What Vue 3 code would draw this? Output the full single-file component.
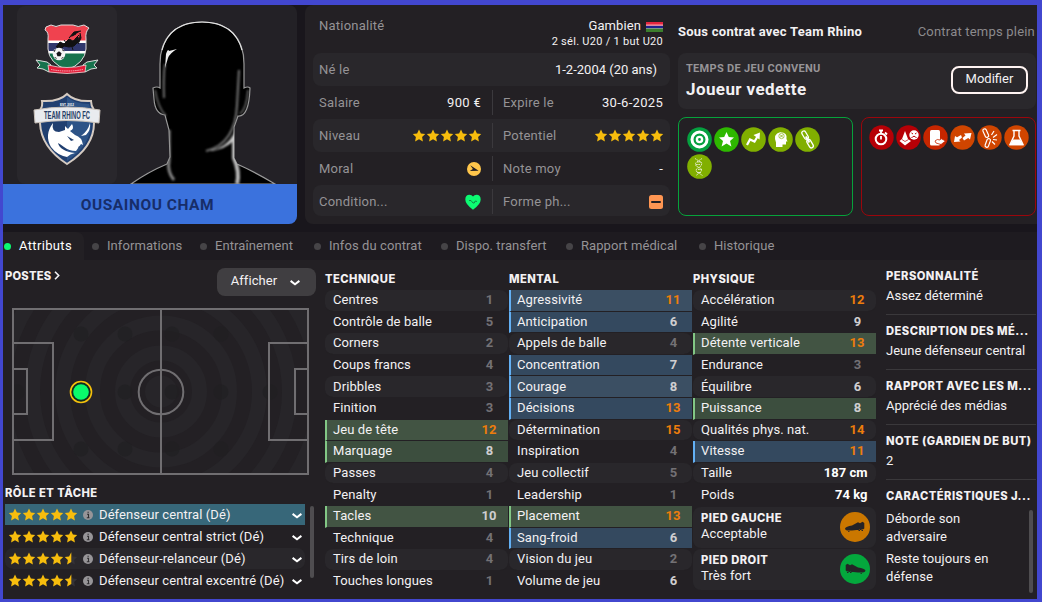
<script setup>
import { computed } from 'vue';

const star = 'M6.5 .6 8.4 4.5 12.7 5 9.6 8 10.4 12.4 6.5 10.3 2.6 12.4 3.4 8 .3 5 4.6 4.5Z';

const tabs = [
  { label: 'Attributs', width: 81 },
  { label: 'Informations', width: 108 },
  { label: 'Entraînement', width: 114 },
  { label: 'Infos du contrat', width: 127 },
  { label: 'Dispo. transfert', width: 125 },
  { label: 'Rapport médical', width: 133 },
  { label: 'Historique', width: 96 },
];

// name, value, highlight (g: key attribute, b: preferable attribute)
const technique = [
  ['Centres', 1], ['Contrôle de balle', 5], ['Corners', 2], ['Coups francs', 4], ['Dribbles', 3],
  ['Finition', 3], ['Jeu de tête', 12, 'g'], ['Marquage', 8, 'g'], ['Passes', 4], ['Penalty', 1],
  ['Tacles', 10, 'g'], ['Technique', 4], ['Tirs de loin', 4], ['Touches longues', 1],
];
const mental = [
  ['Agressivité', 11, 'b'], ['Anticipation', 6, 'b'], ['Appels de balle', 4], ['Concentration', 7, 'b'],
  ['Courage', 8, 'b'], ['Décisions', 13, 'b'], ['Détermination', 15], ['Inspiration', 4],
  ['Jeu collectif', 5], ['Leadership', 1], ['Placement', 13, 'g'], ['Sang-froid', 6, 'b'],
  ['Vision du jeu', 2], ['Volume de jeu', 6],
];
const physique = [
  ['Accélération', 12], ['Agilité', 9], ['Détente verticale', 13, 'g'], ['Endurance', 3],
  ['Équilibre', 6], ['Puissance', 8, 'g'], ['Qualités phys. nat.', 14], ['Vitesse', 11, 'b'],
  ['Taille', '187 cm'], ['Poids', '74 kg'],
];

const columns = computed(() => [
  { title: 'TECHNIQUE', rows: technique },
  { title: 'MENTAL', rows: mental },
  { title: 'PHYSIQUE', rows: physique },
]);

const level = (value) => {
  if (typeof value === 'string') return 'unit';
  if (value > 10) return 'high';
  return value > 5 ? 'mid' : 'low';
};

const roles = [
  { name: 'Défenseur central (Dé)', half: false },
  { name: 'Défenseur central strict (Dé)', half: false },
  { name: 'Défenseur-relanceur (Dé)', half: true },
  { name: 'Défenseur central excentré (Dé)', half: true },
];

const facts = [
  ['PERSONNALITÉ', 'Assez déterminé'],
  ['DESCRIPTION DES MÉ...', 'Jeune défenseur central'],
  ['RAPPORT AVEC LES M...', 'Apprécié des médias'],
  ['NOTE (GARDIEN DE BUT)', '2'],
];

const spots = [
  [69, 26], [113, 26], [160, 26], [209, 26],
  [5, 84], [113, 84], [160, 84], [209, 84], [258, 84],
  [69, 141], [113, 141], [160, 141], [209, 141],
];

const body = 'M131 184Q148 172 167 164L170 157L169 130L165 115Q155 114 154 99L153 88Q157 86 160 88L160 64C160 38 175 22 202 22C229 22 244 38 244 64L244 88Q248 86 250 88Q249 117 238 116L234 127V158L237 164Q255 172 275 184Z';
</script>
<template>
  <div class="screen">
    <header class="top">
      <section class="player">
        <div class="portrait">
          <div class="badges">
            <svg class="flag-badge" width="64" height="52" viewBox="0 0 64 52">
              <path d="M1 36 12 38 16 41 14 48 8 45 2 44 5 41ZM63 36 52 38 48 41 50 48 56 45 62 44 59 41Z" fill="#16734d" stroke="#d9dedb" stroke-width="1" />
              <clipPath id="shield"><path d="M11 3 16 1Q21 4 26 1H38Q43 4 49 1L54 4Q50 8 51 15V25Q50 39 32 46Q14 39 13 25V15Q14 8 10 6Z" /></clipPath>
              <g clip-path="url(#shield)">
                <path d="M8 0H56V18H8Z" fill="#f0424f" />
                <path d="M8 16.5H56V19.5H8ZM8 27H56V30H8Z" fill="#fff" />
                <path d="M8 19H56V27H8Z" fill="#30376d" />
                <path d="M8 29.5H56V48H8Z" fill="#16734d" />
              </g>
              <path d="M11 3 16 1Q21 4 26 1H38Q43 4 49 1L54 4Q50 8 51 15V25Q50 39 32 46Q14 39 13 25V15Q14 8 10 6Z" fill="none" stroke="#e2dede" />
              <path d="M21 23 25 18 29 20 34 15 38 17 43 13 44 17 39 22 34 23 29 22 25 26M34 14 39 8 46 7M37 12 41 10M45 9 46 14 43 20M36 20 38 26M32 20 29 16M40 15 44 11" fill="#111" stroke="#111" stroke-width="1" />
              <circle cx="24" cy="30" r="6.3" fill="#f4f4f4" />
              <path d="M24 27.3 26.6 29.2 25.6 32.3H22.4L21.4 29.2ZM18.5 27 21 25 19.6 28ZM27 24.7 29.6 27.3 27.7 27ZM19 33 21 33.5 22 35.5ZM29 33 27 33.5 26 35.5Z" fill="#17161a" />
              <path d="M13 41Q32 46 51 41L50 48Q32 51 14 48Z" fill="#e41d39" stroke="#e9d9d9" stroke-width=".8" />
              <path d="M16 45.5Q32 48.5 48 45.5" fill="none" stroke="#f7b5bd" stroke-width="1" stroke-dasharray="1.5 .7" />
            </svg>
            <svg class="club-badge" width="68" height="74" viewBox="0 0 68 74">
              <path d="M34 2Q42 10 58 9Q58 14 61 18V31Q61 55 34 72Q8 55 7 31V18Q10 14 9 9Q26 10 34 2Z" fill="#203f70" stroke="#d5cbc2" stroke-width="2" />
              <path d="M34 5Q42 12 56 12L58 19V31Q58 53 34 69Z" fill="#2d5387" />
              <path d="M1 18Q34 12 67 18L66 31Q34 26 2 31Z" fill="#e9ebef" stroke="#c9c1b9" />
              <text x="34" y="26.5" text-anchor="middle" textLength="46" lengthAdjust="spacingAndGlyphs">TEAM RHINO FC</text>
              <text x="34" y="13.5" class="est" text-anchor="middle">EST. 2012</text>
              <path d="M20 31Q11 43 18 55Q24 63 34 65Q37 62 42 61Q27 59 25 51Q27 52 31 55Q36 59 43 59L48 52L50 53Q49 45 42 43L37 39Q42 37 39 32L35 37L32 34V38L26 40Q18 40 20 31ZM57 31Q58 38 53 43L48 44Q55 39 57 31Z" fill="#fff" />
              <path d="M34 44 41 48 38 49ZM45 55 47 54 46 56Z" fill="#203f70" />
            </svg>
          </div>
          <svg class="silhouette" width="180" height="179" viewBox="117 5 180 179">
            <defs>
              <filter id="soft" x="-20%" y="-20%" width="140%" height="140%"><feGaussianBlur stdDeviation="1.3" /></filter>
              <clipPath id="body"><path :d="body" /></clipPath>
            </defs>
            <path :d="body" fill="#000" stroke="#999" stroke-width="1.2" />
            <path d="M162 50C167 32 179 22 202 22C225 22 237 32 242 50" fill="none" stroke="#e4e4e4" stroke-width="1.2" />
            <g clip-path="url(#body)" fill="none" filter="url(#soft)">
              <path d="M164 98Q163 78 165 64" stroke="#888" stroke-width="1.6" />
              <path d="M239 70Q238 88 237 105C236 130 226 146 206 151" stroke="#777" stroke-width="2" />
              <path d="M234 136V158Q240 172 237 184" stroke="#bbb" stroke-width="4" />
              <path d="M169 130V160Q167 172 174 180" stroke="#888" stroke-width="3" />
              <path d="M155 90Q158 108 166 116M248 90Q247 108 240 114" stroke="#777" stroke-width="1.5" />
              <path d="M208 151Q228 148 235 131V139Q226 150 208 151Z" fill="#ccc" />
            </g>
            <path d="M166 54Q168 48 169 51L177 49Q170 53 168 58L165 68Z" fill="#eee" />
          </svg>
        </div>
        <h1>OUSAINOU CHAM</h1>
      </section>

      <section class="summary">
        <div class="info">
          <div class="nation">
            <span class="label">Nationalité</span>
            <div class="nation-value">
              <div class="country">Gambien
                <svg width="17" height="10" viewBox="0 0 17 10">
                  <path d="M0 0H17V4H0Z" fill="#e3253f" /><path d="M0 2H17V4H0Z" fill="#ef6573" />
                  <path d="M0 3.5H17V7H0Z" fill="#b6b3db" /><path d="M0 4H17V6H0Z" fill="#20218c" />
                  <path d="M0 6.5H17V10H0Z" fill="#3b7d2d" />
                </svg>
              </div>
              <div class="caps">2 sél. U20 / 1 but U20</div>
            </div>
          </div>
          <div class="info-row shaded born"><span class="label">Né le</span><span>1-2-2004 (20 ans)</span></div>
          <div class="info-row">
            <div class="cell"><span class="label">Salaire</span><span class="wide">900 €</span></div>
            <div class="cell"><span class="label">Expire le</span><span class="wide">30-6-2025</span></div>
          </div>
          <div class="info-row shaded">
            <div v-for="name in ['Niveau', 'Potentiel']" :key="name" class="cell rating">
              <span class="label">{{ name }}</span>
              <span class="stars"><svg v-for="n in 5" :key="n" width="14" height="13" viewBox="0 0 13 13"><path :d="star" fill="#f7bd0d" /></svg></span>
            </div>
          </div>
          <div class="info-row">
            <div class="cell">
              <span class="label">Moral</span>
              <svg width="14" height="14" viewBox="0 0 15 15"><circle cx="7.5" cy="7.5" r="7.5" fill="#ffc64b" /><path d="M3.5 3.5 12.5 9.5 3 9.7 6.3 7.6Z" fill="#252024" /></svg>
            </div>
            <div class="cell"><span class="label">Note moy</span><span>-</span></div>
          </div>
          <div class="info-row shaded last">
            <div class="cell">
              <span class="label">Condition...</span>
              <svg width="16" height="16" viewBox="0 0 16 16"><path d="M8 15.7Q.3 10.2.3 5.5Q.3.8 4.5.7Q6.8.7 8 2.5Q9.2.7 11.5.7Q15.7.8 15.7 5.5Q15.7 10.2 8 15.7Z" fill="#0cfa72" /><path d="M4 6.5 6 6.5 8 9 9.2 9 10.2 7 12 7.5" fill="none" stroke="#126d3d" stroke-width=".8" /></svg>
            </div>
            <div class="cell">
              <span class="label">Forme ph...</span>
              <svg width="14" height="14" viewBox="0 0 14 14"><rect width="14" height="14" rx="2.5" fill="#ff9652" /><path d="M3 7H11" stroke="#252024" stroke-width="2" stroke-linecap="round" /></svg>
            </div>
          </div>
        </div>

        <div class="contract">
          <div class="contract-head"><b>Sous contrat avec Team Rhino</b><span>Contrat temps plein</span></div>
          <div class="playing-time">
            <div>
              <h3>TEMPS DE JEU CONVENU</h3>
              <p>Joueur vedette</p>
            </div>
            <button class="edit">Modifier</button>
          </div>
          <div class="traits">
            <div class="trait-box good">
              <svg viewBox="0 0 25 25"><circle cx="12.5" cy="12.5" r="12.3" fill="#05a03f" /><circle cx="12.5" cy="12.5" r="7.5" fill="none" stroke="#fff" stroke-width="3" /><circle cx="12.5" cy="12.5" r="2.6" fill="none" stroke="#fff" stroke-width="2.4" /></svg>
              <svg viewBox="0 0 25 25"><circle cx="12.5" cy="12.5" r="12.3" fill="#2eb800" /><path d="M12.5 5 14.8 10 20 10.4 16 14 17.4 19.6 12.5 16.6 7.6 19.6 9 14 5 10.4 10.2 10Z" fill="#fff" /></svg>
              <svg viewBox="0 0 25 25"><circle cx="12.5" cy="12.5" r="12.3" fill="#81af00" /><path d="M6 18 9 12.5 13.5 14.5 16.5 9.5" fill="none" stroke="#fff" stroke-width="2.2" /><path d="M12.5 8 19 5.5 18.5 12.5Z" fill="#fff" /></svg>
              <svg viewBox="0 0 25 25"><circle cx="12.5" cy="12.5" r="12.3" fill="#81af00" /><path d="M8 20V15.5Q4.8 7 12 5.3Q19.6 5 18.5 12L19.5 14.5H18V17.5H14.5V20Z" fill="#fff" /><circle cx="13.5" cy="9" r="2.7" fill="none" stroke="#81af00" stroke-width=".6" /><path d="M12 7.5 15 10.5M15 7.5 12 10.5" stroke="#81af00" stroke-width=".8" /></svg>
              <svg viewBox="0 0 25 25"><circle cx="12.5" cy="12.5" r="12.3" fill="#81af00" /><g fill="none" stroke="#fff" stroke-width="1.3" transform="rotate(-30 12.5 12.5)"><rect x="10.6" y="3" width="4" height="9" rx="2" /><rect x="10.6" y="13" width="4" height="9" rx="2" /><path d="M12.6 9V16" stroke-width="2" /></g></svg>
              <svg viewBox="0 0 25 25"><circle cx="12.5" cy="12.5" r="12.3" fill="#81af00" /><path d="M8 4.5 15 9 14 12 9.5 15 9 17 15.5 21.5M15 4.5 8.5 9 9 12 14 14.5 14.5 17 9 21.5M10 8H14M9 10.5H13M11 15.5H15M10 18.5H14" fill="none" stroke="#eff4df" stroke-width=".8" stroke-dasharray="1.8 .5" /></svg>
            </div>
            <div class="trait-box bad">
              <svg viewBox="0 0 25 25"><circle cx="12.5" cy="12.5" r="12.2" fill="#b60006" /><circle cx="12" cy="14" r="5.3" fill="none" stroke="#fff" stroke-width="2" /><path d="M10 5.5H14M12 6V9M12 14.5V11M16 7.5 18 9.5" stroke="#fff" stroke-width="1.8" /></svg>
              <svg viewBox="0 0 25 25"><circle cx="12.5" cy="12.5" r="12.2" fill="#b60006" /><path d="M9 6 6 14 3.5 16 9 20.5 15 16 12 14Z" fill="#fff" /><path d="M6 14.5 9 16.5 12.5 14.5" fill="none" stroke="#b60006" stroke-width=".7" /><circle cx="18" cy="10" r="4.7" fill="#fff" /><path d="M15.5 8 17 9M20.5 8 19 9M15.5 13Q18 9.5 20.5 13" fill="none" stroke="#b60006" stroke-width="1" /></svg>
              <svg viewBox="0 0 25 25"><circle cx="12.5" cy="12.5" r="12.2" fill="#c72600" /><rect x="7" y="5" width="10" height="15.5" rx="1.5" fill="#fff" /><path d="M12 16Q14 13.5 17 15L18 13.5 22.5 16 18 19.5 13 18Z" fill="#fff" stroke="#c72600" stroke-width=".8" /></svg>
              <svg viewBox="0 0 25 25"><circle cx="12.5" cy="12.5" r="12.2" fill="#d04500" /><path d="M4 17 5 11 7 12.2 11 10 12 12.5 9 15 10.5 16.5ZM21.5 8 14 8.5 15.5 10.5 12.5 13 14 15.5 18.2 13 20 14.5Z" fill="#fff" /></svg>
              <svg viewBox="0 0 25 25"><circle cx="12.5" cy="12.5" r="12.2" fill="#d04500" /><g fill="none" stroke="#fff" stroke-width="1.2"><rect x="7" y="3.5" width="3.5" height="9" rx="1.7" transform="rotate(-25 9 8)" /><rect x="9" y="13.5" width="3.5" height="9" rx="1.7" transform="rotate(20 11 18)" /><path d="M14.5 10 17 6M16 12.5 20 9.5M16 14.5 20 15M15 16.5 18 19.5" /></g></svg>
              <svg viewBox="0 0 25 25"><circle cx="12.5" cy="12.5" r="12.2" fill="#d04500" /><path d="M8.5 5.5H16.5M10 6V11L6 19.5H19L15 11V6" fill="none" stroke="#fff" stroke-width="1.4" /><path d="M9 14.5H16L19.5 20.3H5.5Z" fill="#fff" /></svg>
            </div>
          </div>
        </div>
      </section>
    </header>

    <nav class="tabs">
      <div v-for="(tab, i) in tabs" :key="tab.label" class="tab" :class="{ active: i === 0 }" :style="{ width: tab.width + 'px' }">
        <i class="dot" /><span>{{ tab.label }}</span>
      </div>
    </nav>

    <main class="content">
      <section class="left">
        <div class="positions-head">
          <h2>POSTES <svg width="6" height="9" viewBox="0 0 6 9"><path d="M1 .8 4.7 4.5 1 8.2" fill="none" stroke="#f4f1f3" stroke-width="1.6" /></svg></h2>
          <button class="show">Afficher
            <svg width="10" height="6" viewBox="0 0 10 6"><path d="M.6 .9 5 4.3 9.4 .9" fill="none" stroke="#fff" stroke-width="2" /></svg>
          </button>
        </div>
        <svg class="pitch" width="297" height="167" viewBox="0 0 297 167">
          <g fill="none" stroke="#272529" stroke-width="15">
            <circle v-for="r in [8.5, 38.5, 68.5, 98.5, 128.5, 158.5]" :key="r" cx="149" cy="83.5" :r="r" />
          </g>
          <circle v-for="([x, y], i) in spots" :key="i" :cx="x" :cy="y" r="7.5" fill="#1f1f21" opacity=".6" />
          <g fill="none" stroke="#706e71" stroke-width="2">
            <path d="M1 1H296V166H1ZM149 1V166M1 35H41V132H1M1 61H15V106H1M296 35H257V132H296M296 61H283V106H296" />
            <circle cx="149" cy="84" r="22.3" />
          </g>
          <circle cx="69" cy="84" r="10.5" fill="#102c20" stroke="#f5c00c" stroke-width="1.6" />
          <circle cx="69" cy="84" r="7.8" fill="#09fb6b" />
        </svg>
        <h2 class="roles-title">RÔLE ET TÂCHE</h2>
        <div class="roles">
          <div class="role-list">
            <div v-for="(role, i) in roles" :key="role.name" class="role" :class="{ selected: i === 0, alt: i === 2 }">
              <span class="stars">
                <svg v-for="n in 5" :key="n" width="14" height="13" viewBox="0 0 13 13">
                  <path :d="star" :fill="role.half && n === 5 ? '#343236' : '#f7bd0d'" />
                  <path v-if="role.half && n === 5" d="M6.8 .3V10.1L2.6 12.4 3.4 8 .3 5 4.6 4.5Z" fill="#f7bd0d" />
                </svg>
              </span>
              <svg class="about" width="10" height="10" viewBox="0 0 10 10"><circle cx="5" cy="5" r="5" /><path d="M4 4.3H5.5V7.5M3.8 7.8H6.5M4.5 2.2H5.8" /></svg>
              <span class="role-name">{{ role.name }}</span>
              <svg class="arrow" width="10" height="6" viewBox="0 0 10 6"><path d="M.6 .9 5 4.3 9.4 .9" fill="none" stroke="#fff" stroke-width="2" /></svg>
            </div>
          </div>
          <div class="scrollbar" />
        </div>
      </section>

      <section v-for="column in columns" :key="column.title" class="column">
        <h2>{{ column.title }}</h2>
        <div class="attributes">
          <div v-for="([name, value, mark], i) in column.rows" :key="name" class="attribute" :class="[mark, { alt: i % 2 === 0 }]">
            <span>{{ name }}</span><b :class="level(value)">{{ value }}</b>
          </div>
        </div>
        <template v-if="column.title === 'PHYSIQUE'">
          <div class="foot">
            <div><h2>PIED GAUCHE</h2><p>Acceptable</p></div>
            <svg width="30" height="30" viewBox="0 0 30 30"><circle cx="15" cy="15" r="15" fill="#ca7700" /><path d="M5 16.5Q6 14.5 12 13.5L18 10.3 20 11.3 22.5 9.7 24.3 11V16.5Q23 18.5 19 17.8L12 18.6H7Q5 18 5 16.5ZM8 18V19.8H9.5V18ZM18.5 17.5V19H20V17.5ZM21.5 17V19H23V17Z" fill="#252326" /></svg>
          </div>
          <div class="foot">
            <div><h2>PIED DROIT</h2><p>Très fort</p></div>
            <svg width="30" height="30" viewBox="0 0 30 30"><circle cx="15" cy="15" r="15" fill="#04a83d" /><path d="M25.5 16.5Q24.5 14.5 18 13.5L12 10.3 10 11.3 7.5 9.7 5.7 11V16.5Q7 18.5 11 17.8L18 18.6H23Q25.5 18 25.5 16.5ZM22 18V19.8H20.5V18ZM11.5 17.5V19H10V17.5ZM8.5 17V19H7V17Z" fill="#252326" /></svg>
          </div>
        </template>
      </section>

      <aside class="facts">
        <div v-for="[title, text] in facts" :key="title" class="fact"><h2>{{ title }}</h2><p>{{ text }}</p></div>
        <h2 class="habits-title">CARACTÉRISTIQUES J...</h2>
        <div class="habits">
          <div><p>Déborde son<br>adversaire</p><p>Reste toujours en<br>défense</p></div>
          <div class="scrollbar" />
        </div>
      </aside>
    </main>
  </div>
</template>
<style>
body {
  margin: 0;
  background: #4247cf;
}
</style>
<style scoped>
.screen {
  box-sizing: border-box;
  width: 1042px;
  height: 602px;
  border: solid #4247cf;
  border-width: 5px 5px 3px 3px;
  background: #19161c;
  color: #f3f1f3;
  font: 13px/18px Roboto, sans-serif;
  letter-spacing: 0.1px;
  overflow: hidden;
  display: flex;
  flex-direction: column;
}

h1, h2, h3, p {
  margin: 0;
}

h2 {
  font: 800 11.2px/16px Inter, sans-serif;
  letter-spacing: 0.46px;
  white-space: nowrap;
}

button {
  font: inherit;
  letter-spacing: inherit;
  color: inherit;
  padding: 0;
}

svg {
  flex-shrink: 0;
}

.top {
  display: flex;
  gap: 8px;
  height: 219px;
  margin-bottom: 8px;
}

.player {
  width: 294px;
  background: #232126;
  border-radius: 0 8px 8px 0;
  overflow: hidden;

  & .portrait {
    display: flex;
    height: 179px;
    padding-left: 14px;
  }

  & .badges {
    box-sizing: border-box;
    width: 100px;
    height: 178px;
    margin-top: 1px;
    background: #29272c;
    border-radius: 8px;
    display: flex;
    flex-direction: column;
    align-items: center;
    padding-top: 18px;
    gap: 16px;

    & svg {
      overflow: visible;
    }

    & text {
      font: 700 10px 'Liberation Sans', sans-serif;
      fill: #263d66;
      letter-spacing: 0;
    }

    & .est {
      font-size: 3px;
      fill: #fff;
    }
  }

  & h1 {
    height: 40px;
    background: #3b72dd;
    color: #172d69;
    font: 700 15.5px/42px Roboto, sans-serif;
    letter-spacing: 0.55px;
    text-align: center;
    padding-right: 5px;
  }
}

.summary {
  flex: 1;
  display: flex;
  background: #232024;
  border-radius: 8px 0 0 8px;
}

.info {
  width: 357px;
  padding: 4px 8px 0;
}

.label {
  color: #959396;
  letter-spacing: 0.23px;
}

.wide {
  letter-spacing: 0.3px;
}

.nation {
  display: flex;
  justify-content: space-between;
  height: 44px;
  padding: 8px 7px 0 6px;
  box-sizing: border-box;
  text-align: right;

  & .country {
    display: flex;
    justify-content: flex-end;
    align-items: center;
    gap: 5px;
    height: 17px;

    & svg {
      margin-top: 2px;
    }
  }

  & .caps {
    font-size: 11px;
    line-height: 15px;
    letter-spacing: 0.28px;
  }
}

.info-row {
  display: flex;
  align-items: center;
  height: 33px;
  border-radius: 8px;

  &.shaded {
    background: #29272b;
  }

  &.last {
    box-sizing: border-box;
    height: 31px;
    padding-top: 2px;
  }

  &.born {
    justify-content: space-between;
    padding: 0 13px 0 6px;
    letter-spacing: 0;
  }
}

.cell {
  box-sizing: border-box;
  width: 179px;
  height: 25px;
  padding: 0 11px 0 6px;
  display: flex;
  align-items: center;
  justify-content: space-between;

  &.rating {
    padding-right: 10px;
  }

  & + .cell {
    width: 178px;
    border-left: 1px solid #3b393d;
    padding: 0 7px 0 10px;

    &.rating {
      padding-right: 6px;
    }
  }
}

.stars {
  display: flex;
}

.contract {
  width: 358px;
  padding-top: 17px;

  & .contract-head {
    display: flex;
    justify-content: space-between;
    padding-right: 1px;
    height: 31px;
    line-height: 19px;

    & b {
      letter-spacing: 0.25px;
    }

    & span {
      color: #8c8a8d;
      letter-spacing: 0.2px;
    }
  }

  & .playing-time {
    box-sizing: border-box;
    height: 56px;
    padding: 7px 8px 0;
    background: #2a282c;
    border-radius: 8px;
    display: flex;
    justify-content: space-between;
  }

  & h3 {
    font-size: 11px;
    line-height: 17px;
    color: #969497;
    letter-spacing: 0.3px;
  }

  & p {
    font: 700 17px/25px Roboto, sans-serif;
    letter-spacing: 0.4px;
  }

  & .edit {
    width: 77px;
    height: 28px;
    margin-top: 6px;
    padding-bottom: 3px;
    background: none;
    border: 2px solid #fff4f2;
    border-radius: 8px;
    letter-spacing: 0;
  }
}

.traits {
  display: flex;
  gap: 8px;
  margin-top: 8px;
}

.trait-box {
  box-sizing: border-box;
  width: 175px;
  height: 99px;
  border-radius: 8px;
  padding: 8px 7px;
  display: flex;
  flex-wrap: wrap;
  align-content: flex-start;
  gap: 2px;

  & svg {
    width: 25px;
    height: 25px;
  }

  &.good {
    border: 1px solid #06a23b;
    padding: 8.5px 28px 0 7.7px;
  }

  &.bad {
    border: 1px solid #9b060c;
    padding: 7px 4px 0 6.7px;
  }
}

.tabs {
  display: flex;
  height: 28px;
  flex-shrink: 0;
  background: #1e1b20;
}

.tab {
  box-sizing: border-box;
  display: flex;
  align-items: center;
  gap: 8px;
  padding-left: 8px;
  color: #959396;
  letter-spacing: 0.08px;
  white-space: nowrap;

  & .dot {
    width: 7px;
    height: 7px;
    border-radius: 50%;
    background: #464447;
  }

  &.active {
    padding-left: 1px;
    letter-spacing: 0.35px;
    color: #fff;
    background: #232024;
    border-top-right-radius: 8px;

    & .dot {
      background: #0bf970;
    }
  }
}

.content {
  flex: 1;
  display: flex;
  background: #232024;
}

.left {
  width: 322px;

  & .positions-head {
    display: flex;
    justify-content: space-between;
    height: 48px;
    padding: 8px 9px 0 2px;
    box-sizing: border-box;

    & h2 {
      letter-spacing: 0.2px;
    }
  }

  & .show {
    width: 99px;
    height: 28px;
    border: 0;
    border-radius: 8px;
    background: #403e41;
    display: flex;
    align-items: center;
    justify-content: center;
    gap: 13px;
    padding: 0 2px 3px 0;

    & svg {
      margin-top: 5px;
    }
  }

  & .pitch {
    display: block;
    margin-left: 9px;
  }

  & .roles-title {
    margin: 10px 0 3px 2px;
  }
}

.roles {
  display: flex;
  gap: 5px;
  padding-left: 2px;
}

.scrollbar {
  width: 4px;
  height: 72px;
  margin-top: 2px;
  border-radius: 2px;
  background: #4f4d50;
}

.role-list {
  width: 300px;
}

.role {
  box-sizing: border-box;
  height: 22px;
  border-bottom: 1px solid #232024;
  display: flex;
  align-items: center;
  padding: 0 3px;
  background-clip: padding-box;

  &.selected {
    background-color: #376779;
  }

  &.alt {
    background-color: #29272b;
    border-radius: 8px;
  }

  & .about {
    margin: 1px 6px 0 5px;
    fill: #979598;
    stroke: #302e31;
    stroke-width: 1.1;

    & circle {
      stroke: none;
    }
  }

  & .role-name {
    flex: 1;
    white-space: nowrap;
  }

  & .arrow {
    margin-top: 2px;
  }
}

.column {
  width: 183px;
  margin-right: 1px;
  padding-top: 11px;
}

.attributes {
  padding-top: 3px;
}

.attribute {
  box-sizing: border-box;
  height: 21.6px;
  border-bottom: 1px solid #232024;
  background-clip: padding-box;
  display: flex;
  align-items: center;
  justify-content: space-between;
  padding: 0 11.5px 0 8px;

  & b {
    min-width: 14px;
    text-align: center;
    letter-spacing: 0;
  }

  &.alt {
    background-color: #29272b;
    border-radius: 8px;
  }

  &.g, &.b {
    border-left: 2px solid #82c785;
    border-radius: 0;
    padding-left: 6px;
    background-color: #3c4e3e;
  }

  &.b {
    border-left-color: #63b0f4;
    background-color: #34495f;
  }

  &.g.alt {
    background-color: #425443;
  }

  &.b.alt {
    background-color: #3b4f63;
  }

  & .low {
    color: #737175;
  }

  & .mid {
    color: #cfced0;
  }

  & .high {
    color: #ed7d0c;
  }

  & .unit {
    color: #fff;
    margin-right: -3px;
  }
}

.foot {
  box-sizing: border-box;
  height: 41px;
  margin-top: 1px;
  padding: 3px 6px 0 8px;
  display: flex;
  justify-content: space-between;
  background: #29272b;
  border-radius: 8px;

  & svg {
    margin-top: 2px;
  }

  & p {
    line-height: 16px;
  }
}

.facts {
  width: 150px;
  margin-left: 9px;

  & .fact {
    box-sizing: border-box;
    height: 55px;
    padding-top: 8px;
    border-bottom: 1px solid #3a383b;

    & p {
      margin-top: 3px;
      letter-spacing: 0;
    }
  }

  & .habits-title {
    margin-top: 8px;
  }

  & .habits {
    display: flex;
    justify-content: space-between;
    margin-top: 6px;
    padding-right: 3px;

    & p {
      margin-bottom: 4px;
    }
  }

  & .scrollbar {
    height: 83px;
    margin-top: 0;
  }
}
</style>
